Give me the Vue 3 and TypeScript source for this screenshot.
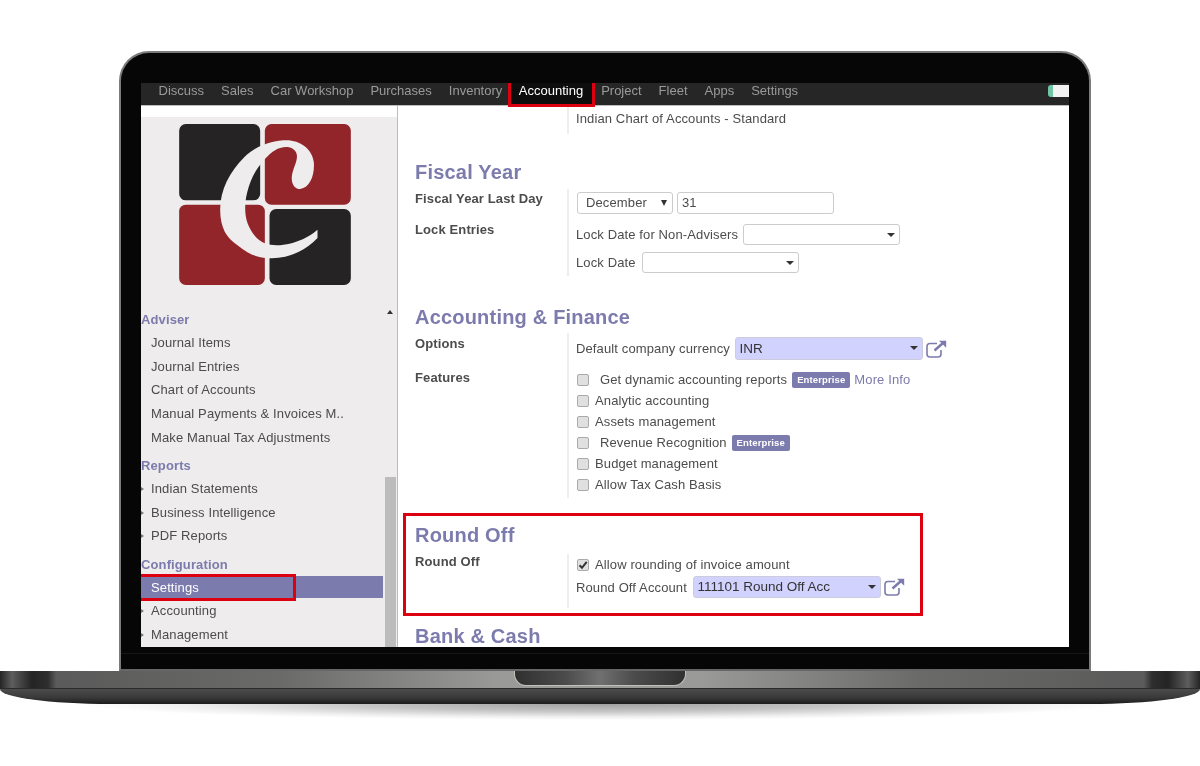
<script setup lang="ts">
interface MenuItem { label: string; caret?: boolean; active?: boolean }
interface MenuGroup { title: string; items: MenuItem[] }
interface Feature { label: string; indent?: boolean; enterprise?: boolean; more?: boolean }

const navItems: string[] = ['Discuss', 'Sales', 'Car Workshop', 'Purchases', 'Inventory', 'Accounting', 'Project', 'Fleet', 'Apps', 'Settings']

const menu: MenuGroup[] = [
  { title: 'Adviser', items: [
    { label: 'Journal Items' }, { label: 'Journal Entries' }, { label: 'Chart of Accounts' },
    { label: 'Manual Payments & Invoices M..' }, { label: 'Make Manual Tax Adjustments' }
  ] },
  { title: 'Reports', items: [
    { label: 'Indian Statements', caret: true }, { label: 'Business Intelligence', caret: true }, { label: 'PDF Reports', caret: true }
  ] },
  { title: 'Configuration', items: [
    { label: 'Settings', active: true }, { label: 'Accounting', caret: true }, { label: 'Management', caret: true }
  ] }
]

const features: Feature[] = [
  { label: 'Get dynamic accounting reports', indent: true, enterprise: true, more: true },
  { label: 'Analytic accounting' },
  { label: 'Assets management' },
  { label: 'Revenue Recognition', indent: true, enterprise: true },
  { label: 'Budget management' },
  { label: 'Allow Tax Cash Basis' }
]
</script>

<template>
  <div class="page">
    <div class="lid">
      <div class="screen">
        <nav class="nav">
          <span v-for="n in navItems" :key="n" class="nav-item" :class="{ current: n === 'Accounting' }">{{ n }}</span>
          <span class="toggle"></span>
        </nav>
        <div class="body">
          <aside class="sidebar">
            <div class="logo-band">
              <svg class="logo" width="172" height="161" viewBox="207 253 515 483">
                <rect x="207" y="253" width="243" height="229" rx="20" fill="#262324" />
                <rect x="464" y="253" width="258" height="242" rx="20" fill="#92252a" />
                <rect x="207" y="495" width="257" height="241" rx="20" fill="#92252a" />
                <rect x="478" y="508" width="244" height="228" rx="20" fill="#262324" />
                <path fill="#eeecec" d="M570 448C600 445 614 405 611 368C606 325 565 298 520 302C470 306 430 325 400 355C360 395 330 450 330 510C330 565 350 595 380 615C410 640 440 655 470 655C520 660 580 640 622 595L622 570C600 590 560 610 520 615C490 620 455 615 435 590C415 565 405 540 405 505C405 460 425 405 450 375C470 350 490 330 510 325C535 318 555 325 560 345C563 365 548 385 545 410C543 430 552 448 570 448Z" />
              </svg>
            </div>
            <div class="menu">
              <section v-for="g in menu" :key="g.title" class="group">
                <h4 class="group-title">{{ g.title }}</h4>
                <div v-for="i in g.items" :key="i.label" class="item" :class="{ active: i.active, caret: i.caret }">
                  {{ i.label }}
                  <span v-if="i.active" class="mark"></span>
                </div>
              </section>
            </div>
            <div class="scrollbar">
              <span class="scroll-up"></span>
              <span class="scroll-thumb"></span>
            </div>
          </aside>

          <main class="content">
            <div class="intro">Indian Chart of Accounts - Standard</div>

            <h2 class="title fiscal">Fiscal Year</h2>
            <div class="form fiscal-form">
              <div class="label l-a">Fiscal Year Last Day</div>
              <div class="value v-a">
                <div class="select plain month">December<i class="arrow"></i></div>
                <div class="input">31</div>
              </div>
              <div class="label l-a">Lock Entries</div>
              <div class="value v-b">
                <div class="line">Lock Date for Non-Advisers <div class="select plain wide"><i class="arrow"></i></div></div>
                <div class="line second">Lock Date <div class="select plain wide"><i class="arrow"></i></div></div>
              </div>
            </div>

            <h2 class="title finance">Accounting &amp; Finance</h2>
            <div class="form finance-form">
              <div class="label l-b">Options</div>
              <div class="value v-c">
                <div class="line">Default company currency
                  <div class="select filled cur">INR<i class="arrow"></i></div>
                  <svg class="ext" width="21" height="18" viewBox="0 0 21 18" fill="none" stroke="#7c7bad" stroke-width="1.6">
                    <path d="M11 3.500H4a3 3 0 0 0-3 3v7.500a3 3 0 0 0 3 3h8a3 3 0 0 0 3-3v-4" />
                    <path d="M8.500 10.500 17 3" stroke-width="2.500" />
                    <path d="M13 .800h7.200v7z" fill="#7c7bad" stroke="none" />
                  </svg>
                </div>
              </div>
              <div class="label l-c">Features</div>
              <div class="value v-d">
                <label v-for="f in features" :key="f.label" class="check">
                  <span class="box"></span>
                  <span class="check-text" :class="{ indent: f.indent }">{{ f.label }}</span>
                  <span v-if="f.enterprise" class="badge">Enterprise</span>
                  <span v-if="f.more" class="more">More Info</span>
                </label>
              </div>
            </div>

            <section class="round">
              <h2 class="title">Round Off</h2>
              <div class="form round-form">
                <div class="label">Round Off</div>
                <div class="value v-e">
                  <label class="check">
                    <span class="box on">
                      <svg width="10" height="10" viewBox="0 0 10 10"><path d="M1.500 5.200 4 7.800 8.700 1.800" fill="none" stroke="#333" stroke-width="2" /></svg>
                    </span>
                    <span class="check-text">Allow rounding of invoice amount</span>
                  </label>
                  <div class="line acc">Round Off Account
                    <div class="select filled cur">111101 Round Off Acc<i class="arrow"></i></div>
                    <svg class="ext" width="21" height="18" viewBox="0 0 21 18" fill="none" stroke="#7c7bad" stroke-width="1.6">
                      <path d="M11 3.500H4a3 3 0 0 0-3 3v7.500a3 3 0 0 0 3 3h8a3 3 0 0 0 3-3v-4" />
                      <path d="M8.500 10.500 17 3" stroke-width="2.500" />
                      <path d="M13 .800h7.200v7z" fill="#7c7bad" stroke="none" />
                    </svg>
                  </div>
                </div>
              </div>
            </section>

            <h2 class="title bank">Bank &amp; Cash</h2>
          </main>
        </div>
      </div>
      <div class="chin"></div>
    </div>
    <div class="base">
      <div class="base-top"><span class="notch"></span></div>
      <div class="base-bottom"></div>
    </div>
    <div class="shadow"></div>
  </div>
</template>

<style>
html, body { margin: 0; background: #fff; }
</style>

<style scoped>
.page {
  width: 1200px;
  height: 766px;
  overflow: hidden;
  padding-top: 51px;
  box-sizing: border-box;
  display: flex;
  flex-direction: column;
  align-items: center;
  background: #fff;
  font-family: "Liberation Sans", Arial, sans-serif;
  font-size: 13px;
  letter-spacing: 0.12px;
  color: #4c4c4c;
}
.lid {
  width: 972px;
  height: 620px;
  align-self: flex-start;
  margin-left: 119px;
  box-sizing: border-box;
  border: 2px solid #7b7b7b;
  border-bottom-color: #666;
  border-radius: 30px 30px 0 0;
  background: #060606;
  padding: 30px 20px 0;
}
.screen {
  width: 928px;
  height: 564px;
  background: #fff;
  display: flex;
  flex-direction: column;
  filter: blur(0.5px);
}
.chin { height: 1px; margin: 6px -20px 0; background: #161616; }

.nav {
  height: 22px;
  flex: none;
  background: #262626;
  border-bottom: 1px solid #bdbdbd;
  display: flex;
  align-items: flex-start;
  padding-left: 9px;
  position: relative;
  z-index: 2;
}
.nav-item {
  padding: 0 8.500px;
  line-height: 16px;
  color: #9a9a9a;
  letter-spacing: 0;
  white-space: nowrap;
}
.nav-item.current {
  color: #fff;
  background: #0d0d0d;
  height: 21px;
  padding: 0 9px 0 8px;
  margin: 0 -2.500px 0 -3px;
  border: 3px solid #dc0010;
  border-top: 0;
}
.toggle {
  margin: 2px 0 0 auto;
  width: 16px;
  height: 12px;
  background: #f3f3f3;
  border-left: 5px solid #6ec6a4;
  border-radius: 3px 0 0 3px;
}

.body { flex: 1; min-height: 0; display: flex; }
.sidebar {
  width: 257px;
  flex: none;
  box-sizing: border-box;
  border-right: 1px solid #bdbdbd;
  position: relative;
  overflow: hidden;
  background: linear-gradient(#fff 11px, #eeecec 11px);
}
.logo-band { padding: 18px 0 0 38px; height: 161px; }
.logo { display: block; }
.menu { width: 242px; padding-top: 8px; }
.group-title {
  margin: 8.500px 0 3px;
  font-size: 13px;
  line-height: 16px;
  font-weight: 700;
  color: #7c7bad;
}
.group:first-child .group-title { margin-top: 19px; }
.item {
  height: 23.7px;
  line-height: 23.7px;
  padding-left: 10px;
  position: relative;
  white-space: nowrap;
}
.item.caret::before {
  content: "";
  position: absolute;
  left: 0;
  top: 10px;
  border-left: 3px solid #777;
  border-top: 2px solid transparent;
  border-bottom: 2px solid transparent;
}
.item.active { color: #fff; background: linear-gradient(#7c7bad 22px, transparent 22px); }
.mark {
  position: absolute;
  left: 0;
  top: -2px;
  width: 155px;
  height: 27px;
  box-sizing: border-box;
  border: 3px solid #dc0010;
  border-left: 0;
}
.scrollbar {
  position: absolute;
  top: 0;
  right: 1px;
  bottom: 0;
  width: 11px;
}
.scroll-up {
  position: absolute;
  top: 204px;
  left: 2px;
  border-bottom: 4px solid #333;
  border-left: 3.5px solid transparent;
  border-right: 3.5px solid transparent;
}
.scroll-thumb {
  position: absolute;
  top: 371px;
  bottom: 0;
  left: 0;
  width: 11px;
  background: #bcbcbc;
}

.content {
  flex: 1;
  min-width: 0;
  overflow: hidden;
  padding-left: 17px;
  box-sizing: border-box;
}
.intro {
  height: 28px;
  margin-left: 152px;
  padding: 5px 0 0 7px;
  box-sizing: border-box;
  line-height: 15px;
  border-left: 2px solid #eee;
  width: 400px;
}
.title {
  margin: 0;
  font-size: 20px;
  line-height: 24px;
  font-weight: 700;
  letter-spacing: 0.2px;
  color: #7c7bad;
}
.fiscal { margin-top: 26px; }
.finance { margin-top: 29px; }
.bank { margin-top: 8px; }
.form {
  display: grid;
  grid-template-columns: 152px 1fr;
  width: 545px;
}
.fiscal-form { margin-top: 5px; }
.finance-form { margin-top: 4px; }
.label { font-weight: 700; line-height: 15px; }
.l-a { padding-top: 2px; }
.l-b { padding-top: 3px; }
.l-c { padding-top: 1px; }
.value {
  border-left: 2px solid #eee;
  padding-left: 7px;
  box-sizing: border-box;
}
.v-a { display: flex; gap: 4px; padding-top: 3px; height: 31px; }
.v-b { padding-top: 4px; height: 56px; }
.v-c { padding-top: 4px; height: 36px; }
.v-d { padding-bottom: 3px; }
.v-e { height: 54px; }
.line { display: flex; align-items: center; gap: 5px; white-space: nowrap; }
.second { margin-top: 7px; gap: 6px; }
.select {
  position: relative;
  box-sizing: border-box;
  border-radius: 3px;
  padding-left: 8px;
  color: #333;
  display: block;
  flex: none;
}
.plain {
  height: 22px;
  line-height: 20px;
  background: #fff;
  border: 1px solid #ccc;
}
.month { width: 96px; margin-left: 1px; color: #4c4c4c; }
.wide { width: 157px; height: 21px; }
.filled {
  background: #d2d2ff;
  border: 1px solid #ccd;
  height: 23px;
  line-height: 21px;
  width: 188px;
  padding-left: 3.500px;
  font-size: 13.500px;
  letter-spacing: 0;
}
.arrow {
  position: absolute;
  right: 4px;
  top: 8px;
  border-top: 4px solid #333;
  border-left: 4px solid transparent;
  border-right: 4px solid transparent;
}
.month .arrow { right: 5px; top: 7px; border-top-width: 6px; border-left-width: 3.500px; border-right-width: 3.500px; }
.input {
  width: 157px;
  height: 22px;
  line-height: 20px;
  box-sizing: border-box;
  border: 1px solid #ccc;
  border-radius: 3px;
  padding-left: 4px;
}
.ext { flex: none; margin-left: -2px; }
.acc .ext { margin-left: -3px; }
.check {
  display: flex;
  align-items: center;
  height: 21px;
  white-space: nowrap;
}
.box {
  width: 12px;
  height: 12px;
  box-sizing: border-box;
  flex: none;
  margin-left: 1px;
  border: 1px solid #aaa;
  border-radius: 2px;
  background: #e0e0e0;
  display: flex;
  align-items: center;
  justify-content: center;
}
.check-text { margin-left: 6px; }
.check-text.indent { margin-left: 11px; }
.badge {
  margin-left: 5px;
  height: 16px;
  line-height: 16px;
  padding: 0 5px;
  background: #7c7bad;
  color: #fff;
  font-size: 9.500px;
  font-weight: 700;
  border-radius: 2px;
}
.more { margin-left: 4px; color: #7c7bad; }

.round {
  margin: 15px 0 0 -12px;
  width: 520px;
  height: 103px;
  box-sizing: border-box;
  border: 3px solid #dc0010;
  padding: 7px 0 0 9px;
}
.round-form { margin-top: 7px; width: 505px; }
.acc { margin-top: 1px; height: 22px; gap: 6px; }
.acc .filled { height: 22px; line-height: 20px; }

.base { width: 1200px; flex: none; }
.base-top {
  position: relative;
  height: 18px;
  background: linear-gradient(90deg, #242424 0, #5e5e5e 12px, #242424 32px, #2e2e2e 48px, #5a5a5a 56px, #6a6a68 280px, #9a9a98 500px, #9a9a98 700px, #6a6a68 920px, #5a5a5a 1144px, #2e2e2e 1152px, #242424 1168px, #5e5e5e 1188px, #242424 1200px);
  border-bottom: 1px solid #2a2a2a;
  box-sizing: border-box;
}
.notch {
  position: absolute;
  left: 514px;
  top: 0;
  width: 172px;
  height: 15px;
  box-sizing: border-box;
  background: linear-gradient(90deg, #303030, #4c4c4c 30%, #707070 50%, #4c4c4c 70%, #303030);
  border: 1px solid #c0c0bc;
  border-top: 0;
  border-radius: 0 0 12px 12px;
}
.base-bottom {
  height: 15px;
  background: linear-gradient(#4c4c4c, #3a3a3a 55%, #1c1c1c);
  border-radius: 0 0 110px 110px / 0 0 15px 15px;
}
.shadow {
  width: 1040px;
  height: 16px;
  flex: none;
  background: radial-gradient(ellipse 50% 100% at 50% 0, #a0a0a0, #c4c4c4 45%, #eeeeee 80%, rgba(255, 255, 255, 0) 100%);
}
</style>
